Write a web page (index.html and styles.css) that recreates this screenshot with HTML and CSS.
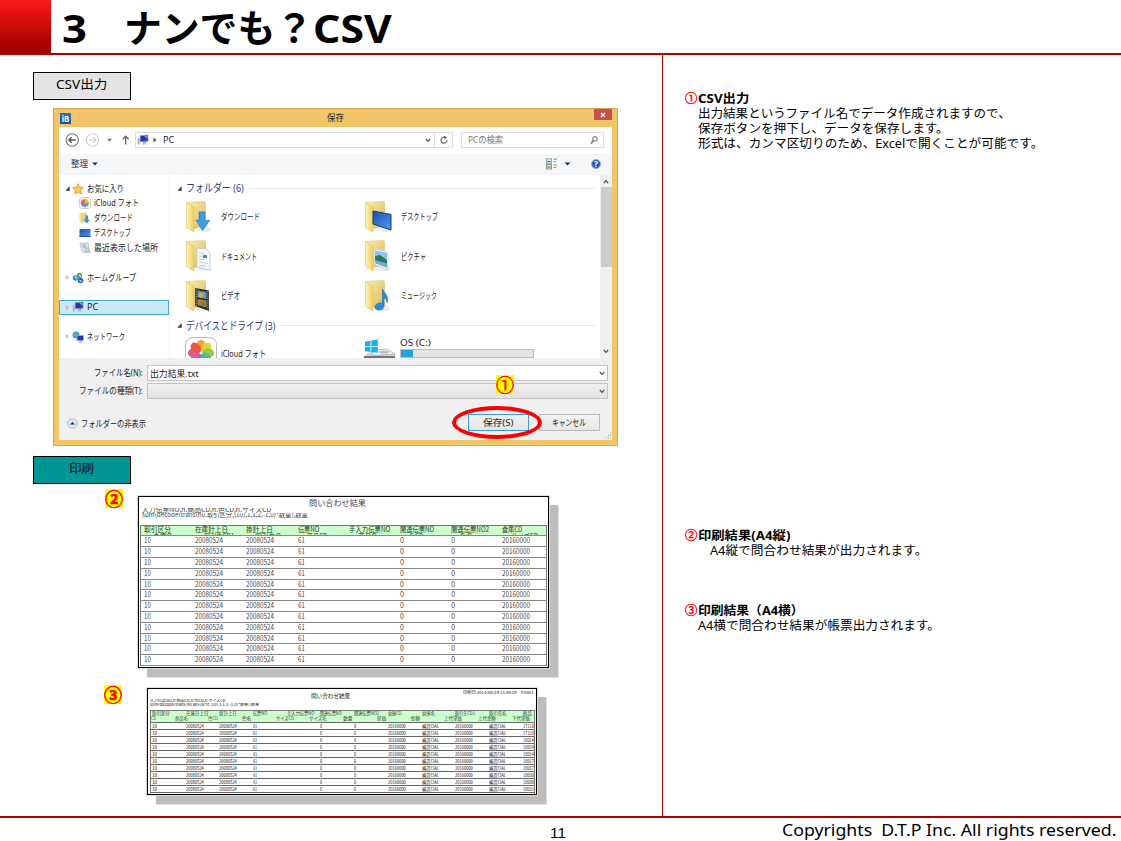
FILE: index.html
```html
<!DOCTYPE html>
<html lang="ja">
<head>
<meta charset="utf-8">
<title>ナンでも？CSV</title>
<link rel="stylesheet" href="styles.css">
</head>
<body>
<svg class="defs" aria-hidden="true">
  <defs>
    <linearGradient id="fold" x1="0" x2="1"><stop offset="0" stop-color="#fff3b8"/><stop offset="1" stop-color="#f0cf63"/></linearGradient>
    <linearGradient id="back" x1="0" y1="0" x2="1" y2="1"><stop offset="0" stop-color="#fbeeb0"/><stop offset="1" stop-color="#dcb85a"/></linearGradient>
    <linearGradient id="blue" x1="0" y1="0" x2="1" y2="1"><stop offset="0" stop-color="#1c4fae"/><stop offset="1" stop-color="#4c9af0"/></linearGradient>
    <symbol id="folder" viewBox="0 0 28 34">
      <path d="M9 31l14 1 4-2-5-5z" fill="#d9dce0" opacity=".6"/>
      <path d="M2 2.500L19 1.500a1.500 1.500 0 0 1 1.500 1.500V26L8 29z" fill="url(#back)" stroke="#dcc273" stroke-width=".6"/>
      <path d="M1.500 2.500L9 7.500V32L1.500 27.500z" fill="url(#fold)" stroke="#dfc268" stroke-width=".6"/>
    </symbol>
    <symbol id="pc" viewBox="0 0 12 11">
      <path d="M.8 3.500h1.800V10H.8z" fill="#a9b0b8"/>
      <path d="M3.200 1.200l7.800-.6v6.200l-7.800.4z" fill="#2337b0" stroke="#8d96b5" stroke-width=".7"/>
      <path d="M7 1.500l3.500-.3v3z" fill="#7e9cf0"/>
      <path d="M6 7.500h3v1.300H6z" fill="#8f979f"/><path d="M4.500 9h6v1h-6z" fill="#b8bec6"/>
    </symbol>
    <symbol id="flower" viewBox="-16 -16 32 32">
      <g opacity=".92"><ellipse cy="-8" rx="5" ry="6.500" fill="#f59a2c"/>
      <ellipse cy="-8" rx="5" ry="6.500" fill="#e3cf22" transform="rotate(45)"/>
      <ellipse cy="-8" rx="5" ry="6.500" fill="#8cc63e" transform="rotate(90)"/>
      <ellipse cy="-8" rx="5" ry="6.500" fill="#45b382" transform="rotate(135)"/>
      <ellipse cy="-8" rx="5" ry="6.500" fill="#5a94d8" transform="rotate(180)"/>
      <ellipse cy="-8" rx="5" ry="6.500" fill="#8d66c0" transform="rotate(225)"/>
      <ellipse cy="-8" rx="5" ry="6.500" fill="#d8508b" transform="rotate(270)"/>
      <ellipse cy="-8" rx="5" ry="6.500" fill="#ec4736" transform="rotate(315)"/></g>
    </symbol>
    <symbol id="chev" viewBox="0 0 6 5"><path d="M.8 1l2.200 2.400L5.200 1" fill="none" stroke="#555" stroke-width="1.300"/></symbol>
    <symbol id="closed" viewBox="0 0 5 6"><path d="M1 1l3 2-3 2z" fill="#fff" stroke="#999" stroke-width=".8"/></symbol>
    <symbol id="open" viewBox="0 0 5 5"><path d="M4.700.3v4.400H.3z" fill="#333"/></symbol>
  </defs>
</svg>

<div class="slide">
  <header class="head">
    <div class="red"></div>
    <h1><span class="num"><span data-w="25">3</span></span><span class="kana" data-w="189">ナンでも？</span><span class="lat" data-w="79">CSV</span></h1>
  </header>

  <div class="body">
    <main class="left">
      <div class="tag gray"><span data-w="51">CSV出力</span></div>

      <section class="win">
        <div class="titlebar">
          <span class="app">iB</span>
          <span class="wtitle"><span data-w="17">保存</span></span>
          <span class="close"><svg viewBox="0 0 6 6"><path d="M1 1l4 4M5 1L1 5" stroke="#fff" stroke-width="1.200"/></svg></span>
        </div>
        <div class="client">
          <div class="addr">
            <svg class="nav" viewBox="0 0 74 16"><g fill="none"><circle cx="10.200" cy="8" r="6.200" stroke="#777" stroke-width="1.100"/><path d="M13.700 8H7.200M9.700 5.200L6.900 8l2.800 2.800" stroke="#555" stroke-width="1.400"/><circle cx="30.500" cy="8" r="6.200" stroke="#ccc"/><path d="M27 8h6.500M31 5.200L33.800 8 31 10.800" stroke="#ccc" stroke-width="1.200"/><path d="M63.700 12.500V4.500M60.700 7.200l3-3 3 3" stroke="#666" stroke-width="1.300"/></g><path d="M45 6.800h5l-2.500 3z" fill="#777"/></svg>
            <div class="path"><svg class="i12"><use href="#pc"/></svg><svg class="crumb" viewBox="0 0 4 6"><path d="M.5.5L3.500 3l-3 2.500z" fill="#555"/></svg><span data-w="11">PC</span><svg class="chev"><use href="#chev"/></svg><span class="reload"><svg viewBox="0 0 10 10"><path d="M8 5.500A3 3 0 1 1 6.300 2.500" fill="none" stroke="#666" stroke-width="1.200"/><path d="M5 .6l3 1.800-2.600 2z" fill="#666"/></svg></span></div>
            <div class="search"><span data-w="35">PCの検索</span><svg viewBox="0 0 10 10"><circle cx="6" cy="3.800" r="2.300" fill="none" stroke="#666"/><path d="M4.300 5.500L2 8.500" stroke="#666" stroke-width="1.300"/></svg></div>
          </div>
          <div class="tools"><span data-w="17">整理</span><svg class="tri" viewBox="0 0 6 4"><path d="M0 .5h6L3 3.500z" fill="#1f3a5c"/></svg>
            <svg class="view" viewBox="0 0 50 12"><rect x=".5" y=".8" width="5" height="4.500" fill="#dceaf0" stroke="#8aa"/><rect x=".5" y="6.500" width="5" height="4.500" fill="#dce8c0" stroke="#8a9a80"/><path d="M1.500 3.500h3M1.500 9h3" stroke="#367"/><path d="M7.500 1.200h3.500M7.500 3.700h2.500M7.500 7h3.500M7.500 9.500h2.500" stroke="#7d8b9b"/><path d="M18.500 4.500h6l-3 3z" fill="#1f3a5c"/></svg>
            <span class="help">?</span>
          </div>
          <div class="pane">
            <nav class="tree">
              <div class="row"><svg class="arr"><use href="#open"/></svg><svg class="i12" viewBox="0 0 12 12"><path d="M6 .7l1.600 3.500 3.800.4-2.800 2.600.8 3.900L6 9.100l-3.400 2 .8-3.900L.6 4.600l3.800-.4z" fill="#ffc84c" stroke="#e58e1e" stroke-width=".8"/></svg><span data-w="37">お気に入り</span></div>
              <div class="row sub"><svg class="i12" viewBox="0 0 12 12"><rect x=".5" y=".5" width="11" height="11" rx="2.500" fill="#fff" stroke="#ccc"/><use href="#flower" x="1" y="1" width="10" height="10"/></svg><span data-w="45">iCloud フォト</span></div>
              <div class="row sub"><svg class="i12" viewBox="0 0 12 12"><use href="#folder" width="10" height="12"/><path d="M6.500 3.500h2.500v4h2L7.800 11.500 4.800 7.500h1.700z" fill="#2e92da"/></svg><span data-w="39">ダウンロード</span></div>
              <div class="row sub"><svg class="i12" viewBox="0 0 12 12"><path d="M.5 2h11v8H.5z" fill="url(#blue)"/><path d="M.5 9h11v1H.5z" fill="#264d91"/></svg><span data-w="37">デスクトップ</span></div>
              <div class="row sub"><svg class="i12" viewBox="0 0 12 12"><path d="M1 1h8l1 7 1.500 2.500H4L2.500 8z" fill="#e3e8ec" stroke="#a4b2bc" stroke-width=".7"/><path d="M3 3h4M3.500 5h4" stroke="#7aa"/><circle cx="8" cy="8" r="2" fill="#c7dbe8" stroke="#8aa"  stroke-width=".6"/></svg><span data-w="64">最近表示した場所</span></div>
              <div class="row gap"><svg class="arr"><use href="#closed"/></svg><svg class="i12" viewBox="0 0 12 12"><circle cx="7.500" cy="3.500" r="2.700" fill="#5fa93a"/><circle cx="3.500" cy="6" r="2.800" fill="#3b8fd0"/><circle cx="8.500" cy="8.500" r="2.800" fill="#2a62b8"/><path d="M3 5l2 1.200M7 3l2 1.500M7.500 8l2 1.500" stroke="#d8ecff" stroke-width="1.200"/></svg><span data-w="49">ホームグループ</span></div>
              <div class="row gap sel"><svg class="arr"><use href="#closed"/></svg><svg class="i12"><use href="#pc"/></svg><span data-w="11">PC</span></div>
              <div class="row gap"><svg class="arr"><use href="#closed"/></svg><svg class="i12" viewBox="0 0 12 12"><circle cx="4" cy="4" r="3.500" fill="#39a3ca"/><path d="M2 2l3 1-2 3z" fill="#79c65a"/><path d="M5 4.500h6.500v5H5z" fill="#2238b8" stroke="#a6b0cc" stroke-width=".7"/><path d="M7 10.300h3v1H7z" fill="#8991a1"/></svg><span data-w="38">ネットワーク</span></div>
            </nav>
            <div class="files">
              <div class="grp"><svg class="arr"><use href="#open"/></svg><span data-w="58">フォルダー (6)</span><i></i></div>
              <div class="items">
                <div class="it"><svg class="big" viewBox="0 0 28 34"><use href="#folder"/><path d="M14 12h6v9l5-1-7.500 10.500L11 20l3 .5z" fill="#3d9fdf" stroke="#1b75b6" stroke-width=".6"/></svg><span data-w="39">ダウンロード</span></div>
                <div class="it"><svg class="big" viewBox="0 0 28 34"><use href="#folder"/><path d="M9 11l18 3.500V30L9 24z" fill="url(#blue)" stroke="#18396f"/></svg><span data-w="37">デスクトップ</span></div>
                <div class="it"><svg class="big" viewBox="0 0 28 34"><use href="#folder"/><path d="M12 9l9 1 4 4v17l-13-3z" fill="#f5f8fb" stroke="#b8c2cb" stroke-width=".7"/><path d="M14 14l6 .8M14 17l9 1.200M14 20l5 .8M14 23l9 1.500M14 26l7 1.200" stroke="#b7c5d2" stroke-width=".8"/><path d="M18 16h4v3h-4z" fill="#4a90b8"/></svg><span data-w="36">ドキュメント</span></div>
                <div class="it"><svg class="big" viewBox="0 0 28 34"><use href="#folder"/><path d="M10 10l14 2.500V31L10 25z" fill="#f4f8fb" stroke="#b9cad5" stroke-width=".7"/><path d="M11 11.500l12 2.200v8L11 18z" fill="#88c4ee"/><path d="M11 17l5-1 7 5v7l-12-4z" fill="#347461"/><path d="M11 21l12 3.500V29l-12-5z" fill="#6eb1cf"/></svg><span data-w="25">ピクチャ</span></div>
                <div class="it"><svg class="big" viewBox="0 0 28 34"><use href="#folder"/><path d="M10 9l14 2.500V32L10 27z" fill="#302e31"/><path d="M12.500 11.500l9 1.500v7l-9-1.500z" fill="#5b9fbc"/><path d="M12.500 20l9 1.500v7l-9-2.500z" fill="#c17834"/><circle cx="16" cy="16" r="2.500" fill="#e0a832"/><circle cx="18" cy="25" r="2.500" fill="#559146"/><path d="M11.200 10v17M22.900 12v19" stroke="#d4dce2" stroke-dasharray="1 1.300"/></svg><span data-w="19">ビデオ</span></div>
                <div class="it"><svg class="big" viewBox="0 0 28 34"><use href="#folder"/><path d="M18.500 10c1 4 7 6 4.500 14-.3-4-2-5-3-5v8c0 5-9 5.500-9 1 0-3 4-5 7.500-3.500z" fill="#2e8bd8" stroke="#1766a8" stroke-width=".6"/></svg><span data-w="36">ミュージック</span></div>
              </div>
              <div class="grp two"><svg class="arr"><use href="#open"/></svg><span data-w="89">デバイスとドライブ (3)</span><i></i></div>
              <div class="drives">
                <div class="it"><svg class="cloud" viewBox="0 0 32 32"><rect x=".5" y=".5" width="31" height="31" rx="7" fill="#fff" stroke="#bbb"/><use href="#flower" x="1.500" y="1.500" width="29" height="29"/></svg><span data-w="45">iCloud フォト</span></div>
                <div class="it"><svg class="disk" viewBox="0 0 32 20"><path d="M1 16l7-5 15-1 8 5v5H0z" fill="#d2d5d8"/><path d="M8 11l15-1 8 5-22 1.500z" fill="#edf0f2" stroke="#8c9298" stroke-width=".5"/><path d="M0 17h31v3H0z" fill="#70757b"/><ellipse cx="20" cy="13" rx="5" ry="1.500" fill="#b8bec4"/><path d="M1 2.500l5.500-.8V7H1zM7.300 1.600l6.500-1V7H7.300zM1 7.800h5.500V13L1 12.300zM7.300 7.800h6.500v6l-6.500-.8z" fill="#11b5ec"/></svg>
                  <div class="osc"><span data-w="31">OS (C:)</span><div class="meter"><b></b></div></div></div>
              </div>
            </div>
            <div class="scroll"><svg class="chev up"><use href="#chev"/></svg><div class="thumb"></div><svg class="chev"><use href="#chev"/></svg></div>
          </div>
          <div class="form">
            <div class="field"><label><span data-w="49">ファイル名(N):</span></label><div class="box"><span data-w="49">出力結果.txt</span><svg class="chev"><use href="#chev"/></svg></div></div>
            <div class="field"><label><span data-w="64">ファイルの種類(T):</span></label><div class="box dim"><svg class="chev"><use href="#chev"/></svg></div></div>
            <div class="foot">
              <svg class="hide" viewBox="0 0 12 12"><circle cx="6" cy="6" r="5.200" fill="#dfe7ef" stroke="#aab6c3"/><path d="M3.300 7L6 4.300 8.700 7z" fill="#234"/></svg>
              <span class="toggle"><span data-w="65">フォルダーの非表示</span></span>
              <div class="btn primary"><span data-w="30">保存(S)</span></div>
              <div class="btn"><span data-w="34">キャンセル</span></div>
            </div>
          </div>
          <svg class="grip" viewBox="0 0 8 8"><path d="M6 1h1v1H6zM4 3h1v1H4zM6 3h1v1H6zM2 5.500h1v1H2zM4 5.500h1v1H4zM6 5.500h1v1H6z" fill="#aaa"/></svg>
        </div>
        <div class="ring"></div>
        <div class="mark one">①</div>
      </section>

      <div class="tag teal"><span data-w="25">印刷</span></div>

      <div class="fig">
        <div class="mark">②</div>
        <div class="report r2">
          <div class="rtitle"><span data-w="57">問い合わせ結果</span></div>
          <div class="cond"><span data-w="129">入力伝票NO,h.商品CD,h.色CD,h.サイズCD</span></div>
          <div class="cond c2"><span data-w="166">sum(decode(trans(n0.取引区分,(10),1,1,2,-1,0)*数量),数量</span></div>
          <div class="grid" id="portrait"></div>
        </div>
      </div>
      <div class="fig f3">
        <div class="mark">③</div>
        <div class="report r3">
          <div class="rtitle"><span data-w="39">問い合わせ結果</span><em data-w="70">印刷日:2014/08/19 13:49:29　P.0001</em></div>
          <div class="cond"><span data-w="76">入力伝票NO,h.商品CD,h.色CD,h.サイズCD</span></div>
          <div class="cond c2"><span data-w="109">sum(decode(trans(n0.取引区分,(10),1,1,2,-1,0)*数量),数量</span></div>
          <div class="grid" id="landscape"></div>
        </div>
      </div>
    </main>

    <aside class="notes">
      <div class="note n1"><h2><em>①</em><span data-w="51">CSV出力</span></h2>
        <p><span data-w="313">出力結果というファイル名でデータ作成されますので、</span></p><p><span data-w="251">保存ボタンを押下し、データを保存します。</span></p><p><span data-w="345">形式は、カンマ区切りのため、Excelで開くことが可能です。</span></p></div>
      <div class="note n2"><h2><em>②</em><span data-w="92">印刷結果(A4縦)</span></h2><p class="in"><span data-w="217">A4縦で問合わせ結果が出力されます。</span></p></div>
      <div class="note n3"><h2><em>③</em><span data-w="106">印刷結果（A4横）</span></h2><p><span data-w="242">A4横で問合わせ結果が帳票出力されます。</span></p></div>
    </aside>
  </div>

  <footer class="footer"><span class="page">11</span><span class="copy"><span data-w="335">Copyrights&nbsp; D.T.P Inc. All rights reserved.</span></span></footer>
</div>
<script src="app.js"></script>
</body>
</html>
```

FILE: styles.css
```css
* { box-sizing: border-box; }
body { margin: 0; background: #fff; color: #000; font-family: "Noto Sans", "Noto Sans CJK JP", sans-serif; overflow: hidden; }
.defs { position: absolute; width: 0; height: 0; }
svg { display: block; flex: none; }
h1, h2, p { margin: 0; }
[data-w] { display: inline-block; white-space: nowrap; transform-origin: 0 50%; }

.slide { width: 1121px; height: 841px; display: flex; flex-direction: column; }
.head { height: 55px; display: flex; border-bottom: 2px solid #b00000; }
.red { width: 51px; background: linear-gradient(#ff1a1a, #a80000 85%); }
h1 { display: flex; align-items: center; font-size: 40px; line-height: 55px; padding-left: 11px; height: 55px; }
.num { width: 62px; }
.kana { font-size: 38px; }
.body { height: 761px; display: flex; }
.left { width: 663px; border-right: 1px solid #b00000; padding: 17px 0 0 33px; }
.footer { height: 25px; border-top: 2px solid #b00000; display: flex; padding-left: 550px; line-height: 26px; }
.page { width: 232px; font: 15.500px/29px "Liberation Sans", Arial, sans-serif; }
.copy { font-size: 15.500px; line-height: 25px; }

.tag { width: 98px; height: 28px; border: 1px solid #000; font-size: 12.500px; line-height: 24px; text-align: center; padding-right: 1px; }
.gray { background: #e4e4e4; }
.teal { background: #009696; margin-top: 10px; }

/* save dialog */
.win { position: relative; margin: 8px 0 0 20px; width: 565px; height: 338px; background: #f0c669; border: 1px solid #d8a651; padding: 0 5px 5px; font-size: 9px; color: #222; display: flex; flex-direction: column; }
.titlebar { height: 18px; display: flex; align-items: center; justify-content: space-between; padding-left: 1px; }
.app { width: 11px; height: 11px; background: linear-gradient(#2b6fc4, #1d4f9f); color: #fff; font-size: 8px; line-height: 11px; font-weight: bold; text-align: center; }
.wtitle { padding-left: 7px; line-height: 17px; height: 18px; }
.close { align-self: flex-start; width: 18px; height: 11px; background: #c9504f; display: grid; place-items: center; }
.close svg { width: 6px; height: 6px; }
.client { flex: 1; position: relative; background: #f0f0f0; display: flex; flex-direction: column; }
.addr { height: 27px; background: #fff; display: flex; align-items: center; padding: 0 8px 1px 3px; }
.nav { width: 74px; height: 16px; margin-right: -1px; }
.path { width: 318px; height: 16px; border: 1px solid #dcdcdc; display: flex; align-items: center; padding-left: 1px; line-height: 14px; }
.i12 { width: 12px; height: 12px; }
.crumb { width: 4px; height: 6px; margin: 0 6px 0 4px; }
.chev { width: 6px; height: 5px; }
.path .chev { margin-left: auto; margin-right: 3px; }
.reload { width: 18px; height: 14px; border-left: 1px solid #dcdcdc; display: grid; place-items: center; }
.reload svg { width: 10px; height: 10px; }
.search { width: 143px; height: 16px; border: 1px solid #dcdcdc; margin-left: 8px; display: flex; justify-content: space-between; align-items: center; padding: 0 4px 0 6px; color: #777; line-height: 14px; }
.search svg { width: 10px; height: 10px; }
.tools { height: 21px; background: #f5f6f7; display: flex; align-items: center; padding: 0 11px 2px 12px; color: #1f3a5c; }
.tri { width: 6px; height: 4px; margin-left: 4px; }
.view { width: 50px; height: 12px; margin-left: auto; margin-right: -5px; }
.help { width: 10px; height: 10px; border-radius: 5px; background: #2c59b8; border: 1px solid #8fa9dc; color: #fff; font-size: 8px; line-height: 8px; font-weight: bold; text-align: center; }
.pane { height: 183px; background: #fff; display: flex; overflow: hidden; }
.tree { width: 111px; padding-top: 6px; border-right: 1px solid #f5f5f5; }
.row { height: 15px; margin-bottom: -.1px; display: flex; align-items: center; padding-left: 6px; line-height: 14px; }
.row .arr { margin-right: 2px; }
.row span { margin-left: 3px; }
.row.sub { padding-left: 20px; }
.row.gap { margin-top: 14.600px; }
.row.sel { background: #cbe8f6; border: 1px solid #3fa9d0; padding-left: 5px; }
.arr { width: 5px; height: 5px; }
.arr use { overflow: visible; }
.files { width: 431px; padding-left: 7px; }
.grp { height: 22px; margin-top: 2px; display: flex; align-items: center; gap: 4px; font-size: 11px; color: #283c86; line-height: 22px; }
.grp i { flex: 1; height: 1px; background: #e8e8e8; margin-right: 5px; }
.grp.two { height: 16px; margin-top: 2px; }
.items { display: grid; grid-template-columns: 179.500px 1fr; grid-auto-rows: 39.500px; padding-left: 8px; margin-top: -2px; }
.it { display: flex; align-items: center; }
.big { width: 28px; height: 34px; margin-right: 8.500px; }
.drives { display: grid; grid-template-columns: 179.500px 1fr; padding-left: 8px; }
.drives .it { align-items: flex-start; }
.cloud { width: 32px; height: 32px; margin: 3px 4px 0 0; }
.cloud + span { margin-top: 13px; }
.disk { width: 32px; height: 20px; margin: 5px 4px 0 0; }
.osc { line-height: 15px; margin-top: 1px; }
.osc > span { display: block; width: max-content; }
.meter { width: 134px; height: 9px; background: #e4e4e4; border: 1px solid #bdbdbd; margin-top: -1px; }
.meter b { display: block; width: 12px; height: 7px; background: #26a0da; }
.scroll { width: 12px; background: #f0f0f0; display: flex; flex-direction: column; align-items: center; padding: 4px 0 4px; }
.scroll .up { transform: rotate(180deg); }
.thumb { width: 11px; height: 80px; background: #cdcdcd; margin: 3px 0 auto; }
.form { padding-top: 7px; }
.field { height: 18px; display: flex; line-height: 15px; }
.field label { width: 84px; text-align: right; margin-right: 4px; }
.box { width: 461px; height: 16px; background: #fff; border: 1px solid #c4c4c4; display: flex; align-items: center; padding: 0 2px; }
.box .chev { margin-left: auto; }
.dim { background: linear-gradient(#efefef, #e2e2e2); }
.foot { display: flex; align-items: center; height: 22px; padding: 0 12px 0 8px; margin-top: 10px; }
.hide { width: 11px; height: 11px; margin: 3px 3px 0 0; }
.toggle { padding-top: 3px; }
.btn { width: 61px; height: 17px; border: 1px solid #bbb; background: linear-gradient(#f3f3f3, #e6e6e6); display: grid; place-items: center; line-height: 15px; }
.primary { margin-left: auto; margin-right: 10px; border-color: #3c9ad8; }
.grip { position: absolute; right: 0; bottom: 0; width: 8px; height: 8px; }
.ring { position: absolute; left: 398px; top: 297px; width: 90px; height: 33px; border: 4px solid #f00; border-radius: 50%; }
.mark { width: 18px; height: 19px; background: #ff0; color: #f00; font: 700 18px/18px "Noto Sans CJK JP", sans-serif; text-align: center; flex: none; -webkit-text-stroke: .5px #f00; }
.mark.one { position: absolute; left: 442px; top: 266px; font-weight: 400; height: 18px; }

/* printed reports */
.fig { display: flex; align-items: flex-start; padding: 5px 0 0 72px; height: 196px; }
.fig.f3 { padding: 5px 0 0 71px; }
.report { background: #fff; border: 1.500px solid #000; outline: 1px solid #ddd; box-shadow: 9px 9px 0 0 #bdbdbd, 10px 10px 0 0 #ddd; overflow: hidden; color: #444; font-family: "Noto Sans CJK JP", sans-serif; font-size: 7px; }
.r2 { width: 411px; height: 172px; margin: 7px 0 0 15px; padding: 1px 1px 0 1px; }
.r3 { width: 390px; height: 107px; margin: 3px 0 0 25px; padding: 1px 1px 0 2px; font-size: 4.700px; color: #111; }
.rtitle { text-align: center; font-size: 8px; height: 10px; line-height: 10px; padding-right: 12px; }
.cond { height: 5px; line-height: 3px; overflow: hidden; margin-left: 2px; }
.c2 { line-height: 3px; }
.r2 .grid { margin-top: 7px; }
.grid { border: 1px solid #777; border-bottom: 0; }
.line { display: grid; border-bottom: 1px solid #888; overflow: hidden; white-space: nowrap; }
.r2 .line { grid-template-columns: repeat(8, 51.200px); height: 10.830px; line-height: 8.500px; padding-left: 3px; }
.line.hd { background: #cfc; color: #243c24; }
.r2 .line.hd { height: 10.200px; line-height: 7px; }
.hd small { display: block; font-size: inherit; padding-left: 9px; line-height: 6px; }
.r3 .rtitle { font-size: 5.600px; height: 9px; line-height: 13px; padding: 0 2px 0 161px; display: flex; justify-content: space-between; }
.r3 .rtitle em { font-style: normal; font-size: 4px; line-height: 5px; }
.r3 .cond { height: 3.500px; line-height: 3px; font-size: 4px; margin-left: 0; }
.r3 .grid { margin-top: 4px; }
.r3 .line { grid-template-columns: repeat(12, 33.700px); height: 7.070px; line-height: 6px; padding-left: 1px; border-color: #666; }
.r3 .line.hd { height: 11.500px; line-height: 5px; }
.r3 .hd small { line-height: 5px; padding-left: 0; margin-left: -11px; }
.r3 .hd > div:first-child small { margin-left: -1px; }

/* explanations */
.notes { flex: 1; padding: 36px 0 0 22px; font-size: 12.300px; line-height: 15px; }
.note h2 { font-size: 12.300px; line-height: 15px; display: flex; }
.note h2 em { font-style: normal; font-weight: 400; color: #f00; width: 13px; font-family: "Noto Sans CJK JP", sans-serif; -webkit-text-stroke: .4px #f00; }
.note p { padding-left: 13px; height: 15px; }
.note p.in { padding-left: 25px; }
.n1 { height: 437px; }
.n2 { height: 75px; }
```

FILE: app.js
```js
// Report rows: each cell is [text, width]; a header cell may carry a second line.
function line(cells, cls) {
  return '<div class="line ' + (cls || '') + '">' + cells.map(function (c) {
    if (!c) return '<div></div>';
    return '<div><span data-w="' + c[1] + '">' + c[0] + '</span>' +
      (c[2] ? '<small><span data-w="' + c[3] + '">' + c[2] + '</span></small>' : '') + '</div>';
  }).join('') + '</div>';
}
var p = line([['取引区分', 27, '倉庫名', 20], ['在庫計上日', 33, '取引先CD1', 30], ['掛計上日', 27, '取引先名', 27], ['伝票NO', 21, '商品CD', 20],
  ['手入力伝票NO', 41, '商品名', 20], ['関連伝票NO', 34, '色CD', 14], ['関連伝票NO2', 38, '色名', 13], ['倉庫CD', 20, 'サイズCD', 27]], 'hd');
for (var i = 0; i < 12; i++) {
  p += line([['10', 7], ['20080524', 28], ['20080524', 28], ['61', 7], null, ['0', 4], ['0', 4], ['20160000', 28]]);
}
document.getElementById('portrait').innerHTML = p;

var q = line([['取引区分', 18, 'CD', 5], ['在庫計上日', 22, '商品名', 13], ['掛計上日', 18, '色CD', 10], ['伝票NO', 14, '色名', 9],
  ['手入力伝票NO', 27, 'サイズCD', 18], ['関連伝票NO', 22, 'サイズ名', 18], ['関連伝票NO2', 25, '数量', 9], ['倉庫CD', 14, '単価', 9],
  ['倉庫名', 13, '金額', 9], ['取引先CD1', 20, '上代単価', 18], ['取引先名', 18, '上代金額', 18], ['商品', 9, '下代単価', 18]], 'hd');
['17110', '17110', '18014', '18014', '18014', '18017', '18017', '18030', '18030', '18031', '18031'].forEach(function (n) {
  q += line([['10', 5], ['20080524', 18], ['20080524', 18], ['61', 4], null, ['0', 2.5], ['0', 2.5], ['20160000', 18],
    ['横浜CIAL', 17], ['20160000', 18], ['横浜CIAL', 17], [n, 11]]);
});
document.getElementById('landscape').innerHTML = q;

document.querySelectorAll('[data-w]').forEach(function (el) {
  var w = parseFloat(el.dataset.w), n = el.offsetWidth;
  el.style.transform = 'scaleX(' + w / n + ')';
  el.style.marginRight = (w - n) + 'px';
});
```
